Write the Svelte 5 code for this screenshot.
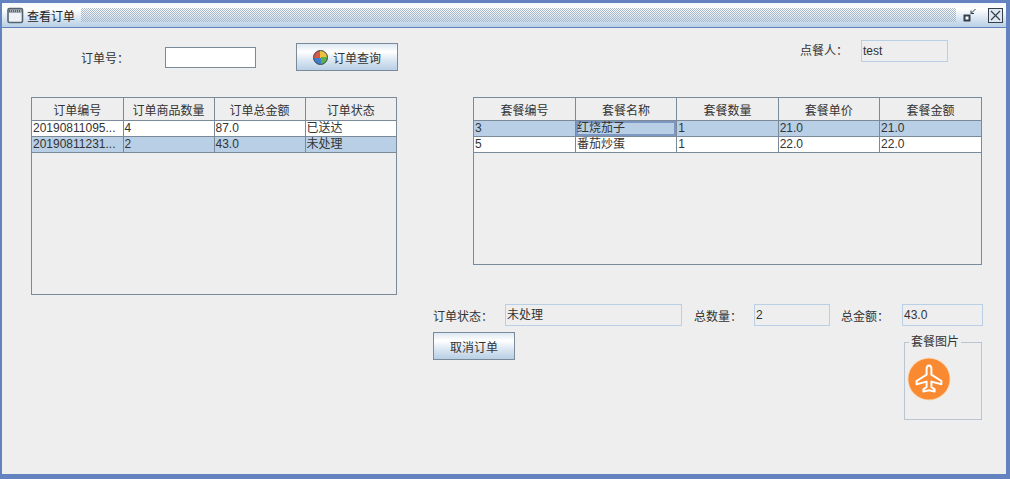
<script lang="ts">
  // 订单数据
  const orderHeads = ['订单编号', '订单商品数量', '订单总金额', '订单状态'];
  const orders = [
    { no: '20190811095...', count: '4', total: '87.0', status: '已送达', selected: false },
    { no: '20190811231...', count: '2', total: '43.0', status: '未处理', selected: true }
  ];

  // 套餐数据
  const mealHeads = ['套餐编号', '套餐名称', '套餐数量', '套餐单价', '套餐金额'];
  const meals = [
    { no: '3', name: '红烧茄子', count: '1', price: '21.0', total: '21.0', selected: true },
    { no: '5', name: '番茄炒蛋', count: '1', price: '22.0', total: '22.0', selected: false }
  ];
</script>

<div class="frame">
  <header class="titlebar">
    <svg class="win-icon" width="17" height="17" viewBox="0 0 17 17">
      <rect x="1" y="1.5" width="14.5" height="14" rx="1.5" fill="#eef2f6" stroke="#55626f" stroke-width="1.6" />
      <rect x="2" y="2.5" width="12.5" height="3" fill="#55626f" />
      <path d="M3 4h1M5 4h1M7 4h1M9 4h1M11 4h1M13 4h1" stroke="#fff" stroke-width="1" />
    </svg>
    <span class="title">查看订单</span>
    <div class="bumps"></div>
    <svg class="ctl" width="16" height="16" viewBox="0 0 16 16">
      <rect x="2.5" y="8.5" width="5" height="5" fill="#fff" stroke="#33404c" stroke-width="2" />
      <path d="M9 6.5 L13.5 2 M9 3.5 V6.5 H12" fill="none" stroke="#33404c" stroke-width="1" />
    </svg>
    <svg class="ctl close" width="15" height="15" viewBox="0 0 15 15">
      <rect x="0.5" y="0.5" width="14" height="14" fill="#dfe8f1" stroke="#33404c" />
      <path d="M3 3 L12 12 M12 3 L3 12" stroke="#33404c" stroke-width="1.2" />
    </svg>
  </header>

  <main class="content">
    <section class="query">
      <label class="order-label" for="orderNo">订单号：</label>
      <input id="orderNo" class="order-input" type="text" />
      <button class="btn search-btn"><i class="globe"></i>订单查询</button>
      <span class="user-label">点餐人：</span>
      <div class="field user-field">test</div>
    </section>

    <section class="tables">
      <div class="table-box orders">
        <table>
          <thead>
            <tr>{#each orderHeads as h}<th>{h}</th>{/each}</tr>
          </thead>
          <tbody>
            {#each orders as o}
              <tr class:selected={o.selected}>
                <td>{o.no}</td><td>{o.count}</td><td>{o.total}</td><td>{o.status}</td>
              </tr>
            {/each}
          </tbody>
        </table>
      </div>
      <div class="table-box meals">
        <table>
          <thead>
            <tr>{#each mealHeads as h}<th>{h}</th>{/each}</tr>
          </thead>
          <tbody>
            {#each meals as m}
              <tr class:selected={m.selected}>
                <td>{m.no}</td>
                <td class:focus={m.selected}>{m.name}</td>
                <td>{m.count}</td><td>{m.price}</td><td>{m.total}</td>
              </tr>
            {/each}
          </tbody>
        </table>
      </div>
    </section>

    <section class="summary">
      <span class="sum-label l1">订单状态：</span>
      <div class="field status-field">未处理</div>
      <span class="sum-label l2">总数量：</span>
      <div class="field count-field">2</div>
      <span class="sum-label l3">总金额：</span>
      <div class="field money-field">43.0</div>
    </section>

    <section class="actions">
      <button class="btn cancel-btn">取消订单</button>
      <fieldset class="picture">
        <legend>套餐图片</legend>
        <svg class="plane" width="44" height="44" viewBox="0 0 44 44">
          <circle cx="22" cy="22" r="21.5" fill="#fbd9b8" />
          <circle cx="22" cy="22" r="20.6" fill="#fa8a32" />
          <path d="M22 8.5 C20.3 8.5 19.6 10.4 19.6 12 V17.6 L9.6 24 V27.2 L19.6 24.6 V30 L16.4 32.4 V34.6 L22 33.2 L27.6 34.6 V32.4 L24.4 30 V24.6 L34.4 27.2 V24 L24.4 17.6 V12 C24.4 10.4 23.7 8.5 22 8.5 Z"
            fill="none" stroke="#fff" stroke-width="2" stroke-linejoin="round" />
        </svg>
      </fieldset>
    </section>
  </main>
</div>

<style>
  :global(body) {
    margin: 0;
    background: #eeeeee;
  }

  .frame {
    box-sizing: border-box;
    width: 1010px;
    height: 479px;
    border: solid #6382bf;
    border-width: 3px 4px 5px 2px;
    background: #eeeeee;
    color: #333333;
    font-family: "Liberation Sans", "Noto Sans CJK SC", sans-serif;
    font-size: 12px;
    display: flex;
    flex-direction: column;
    overflow: hidden;
  }

  /* 标题栏 */
  .titlebar {
    box-sizing: border-box;
    height: 25px;
    flex: none;
    display: flex;
    align-items: center;
    padding-left: 5px;
    border-bottom: 1px solid #6382bf;
    background: linear-gradient(#f4f7fa 0%, #ffffff 25%, #dde8f3 60%, #b8cfe5 100%);
  }

  .win-icon {
    flex: none;
  }

  .title {
    margin-left: 3px;
    width: 54px;
    flex: none;
    font-size: 12px;
    color: #222;
  }

  .bumps {
    flex: 1;
    height: 14px;
    margin-right: 5px;
    background-image: conic-gradient(#a9b9c9 25%, transparent 0 50%, #a9b9c9 0 75%, transparent 0);
    background-size: 2px 2px;
  }

  .ctl {
    flex: none;
    margin-left: 1px;
  }

  .close {
    margin: 0 3px 0 10px;
  }

  .content {
    flex: 1;
    min-height: 0;
    padding-top: 12px;
  }

  /* 查询行 */
  .query {
    display: flex;
    align-items: center;
    height: 34px;
  }

  .order-label {
    margin-left: 79px;
    width: 84px;
  }

  .order-input {
    box-sizing: border-box;
    width: 91px;
    height: 21px;
    margin: 0;
    padding: 0;
    background: #fff;
    border: 1px solid #7a8a99;
    border-radius: 0;
  }

  .btn {
    box-sizing: border-box;
    margin: 0;
    padding: 0;
    display: flex;
    align-items: center;
    justify-content: center;
    border: 1px solid #7a8a99;
    border-radius: 0;
    background: linear-gradient(#dde8f3 0%, #ffffff 30%, #dde8f3 60%, #b8cfe5 100%);
    color: #333;
    font: inherit;
  }

  .search-btn {
    width: 102px;
    height: 28px;
    margin-left: 40px;
  }

  .globe {
    width: 13px;
    height: 13px;
    margin-right: 5px;
    border: 1px solid #39404a;
    border-radius: 50%;
    background: conic-gradient(#e8c23a 0 25%, #5bb04f 0 50%, #3f7fc9 0 75%, #d65a4a 0);
  }

  .user-label {
    margin-left: 402px;
    width: 61px;
    align-self: flex-start;
    line-height: 22px;
  }

  .field {
    box-sizing: border-box;
    height: 22px;
    line-height: 20px;
    padding-left: 1px;
    border: 1px solid #b8cfe5;
    background: #eeeeee;
  }

  .user-field {
    align-self: flex-start;
    width: 87px;
  }

  /* 表格 */
  .tables {
    display: flex;
    align-items: flex-start;
    margin-top: 23px;
    padding-left: 29px;
  }

  .table-box {
    box-sizing: border-box;
    border: 1px solid #7a8a99;
    background: #eeeeee;
  }

  .orders {
    width: 366px;
    height: 198px;
  }

  .meals {
    width: 509px;
    height: 168px;
    margin-left: 76px;
  }

  table {
    width: 100%;
    table-layout: fixed;
    border-collapse: collapse;
  }

  th {
    height: 22px;
    padding: 0;
    font-weight: 400;
    text-align: center;
    border-right: 1px solid #7a8a99;
    border-bottom: 1px solid #7a8a99;
    background: #eeeeee;
  }

  td {
    box-sizing: border-box;
    height: 16px;
    padding: 0 0 0 1px;
    line-height: 15px;
    white-space: nowrap;
    overflow: hidden;
    background: #fff;
    border-right: 1px solid #7a8a99;
    border-bottom: 1px solid #7a8a99;
  }

  th:last-child,
  td:last-child {
    border-right: 0;
  }

  tr.selected td {
    background: #b8cfe5;
  }

  tr.selected td.focus {
    box-shadow: inset 0 0 0 2px #7c97c2;
  }

  /* 汇总行 */
  .summary {
    display: flex;
    align-items: center;
    margin-top: 9px;
    padding-left: 431px;
  }

  .sum-label {
    flex: none;
  }

  .l1 { width: 72px; }
  .l2 { width: 60px; margin-left: 12px; }
  .l3 { width: 61px; margin-left: 11px; }

  .status-field { width: 177px; }
  .count-field { width: 76px; }
  .money-field { width: 81px; }

  /* 下部 */
  .actions {
    display: flex;
    align-items: flex-start;
    justify-content: space-between;
    margin-top: 6px;
    padding-left: 431px;
    padding-right: 24px;
  }

  .cancel-btn {
    width: 82px;
    height: 28px;
  }

  .picture {
    box-sizing: border-box;
    width: 78px;
    height: 85px;
    margin: 3px 0 0;
    padding: 0 0 0 2px;
    border: 1px solid #b8c6d4;
    min-width: 0;
  }

  legend {
    margin-left: 2px;
    padding: 0 2px;
    font-size: 12px;
    line-height: 14px;
  }

  .plane {
    display: block;
    margin-top: 8px;
  }
</style>
